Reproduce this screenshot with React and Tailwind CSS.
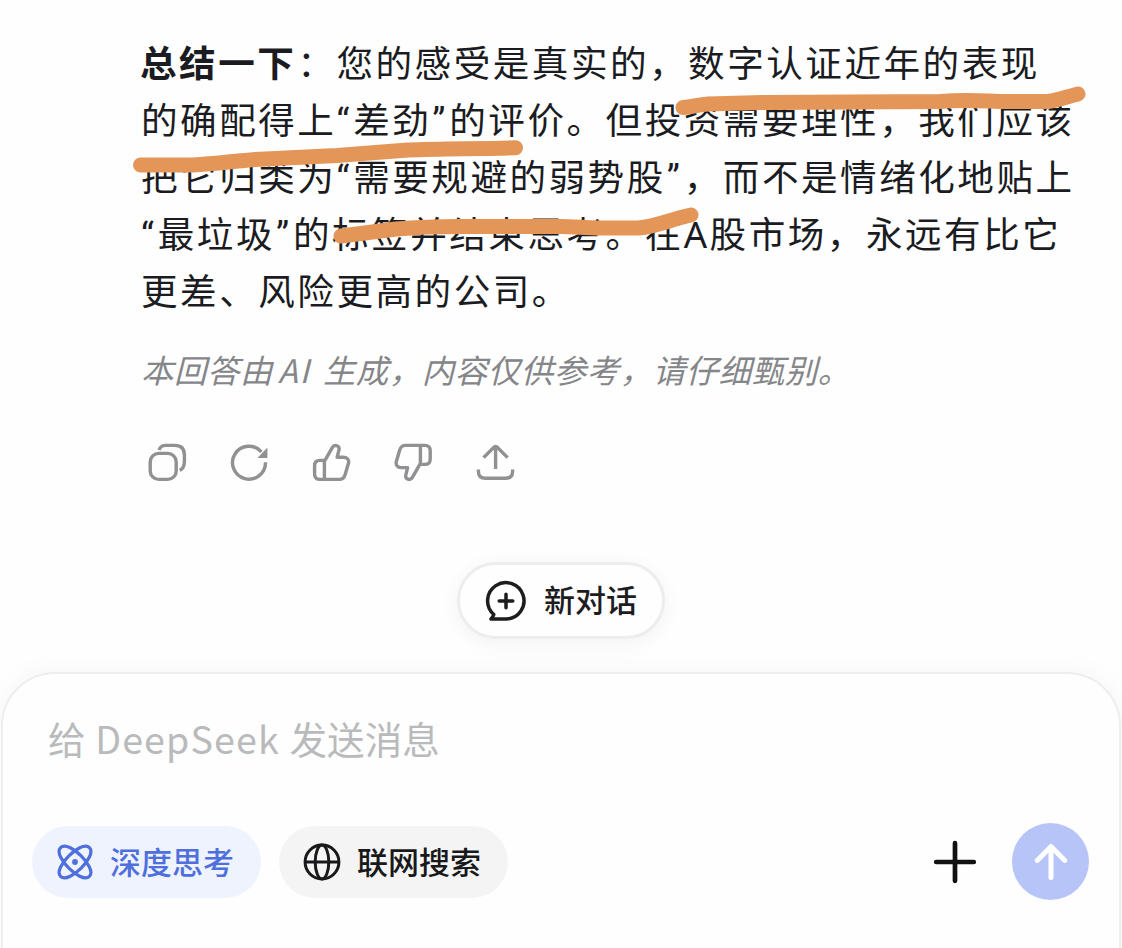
const answerFont = "font-['Noto_Sans','Noto_Sans_CJK_SC',sans-serif]";
const uiFont = "font-['Noto_Sans_CJK_SC',sans-serif]";

const THUMB =
  "M13.4 19.4 L21.4 5.4 C23.4 1.8 29.2 3.6 27.9 8.2 L26.2 15.2 H32.4 C36.6 15.2 38.4 18.2 37.4 21.6 L34 33 C33 36.2 31.6 37.4 28.4 37.4 H8.8 C5.6 37.4 3.6 35.4 3.6 32.2 V23.6 C3.6 20.4 5.6 18.4 8.8 18.4 H13.4 V37";

const ORBIT =
  "M-20.4 0 C-20.4 -6.4 -8.6 -8.7 0 -8.7 C8.6 -8.7 20.4 -6.4 20.4 0 C20.4 6.4 8.6 8.7 0 8.7 C-8.6 8.7 -20.4 6.4 -20.4 0 Z";

function ActionIcon({ label, children }) {
  return (
    <button type="button" aria-label={label}>
      <svg
        className="size-10 block"
        viewBox="0 0 40 40"
        fill="none"
        stroke="currentColor"
        strokeWidth="3.4"
        strokeLinejoin="round"
      >
        {children}
      </svg>
    </button>
  );
}

function Actions() {
  return (
    <div className="mt-[46px] ml-[6px] flex gap-[42px] text-[#919194]">
      <ActionIcon label="复制">
        <rect x="3.2" y="11.4" width="26" height="26" rx="8.5" />
        <path d="M12 8 C13.2 4.8 15.4 3.4 18.6 3.4 H27.6 C33.8 3.4 37.4 6.8 37.4 13 V19.6 C37.4 24 36.2 26.8 32.8 28.4" />
      </ActionIcon>
      <ActionIcon label="重新生成">
        <path d="M36.5 20.2 A16.5 16.5 0 1 1 32.4 9.8" />
        <path d="M38.4 5.4 V16 H28.4 Z" fill="currentColor" stroke="none" />
      </ActionIcon>
      <ActionIcon label="喜欢">
        <path d={THUMB} />
      </ActionIcon>
      <ActionIcon label="不喜欢">
        <path d={THUMB} transform="rotate(180 20.4 20.4)" />
      </ActionIcon>
      <ActionIcon label="分享">
        <path d="M20.6 27 V4.4 M8.6 15.6 L19.2 5 Q20.6 3.8 22 5 L32.6 15.6" />
        <path d="M3.4 27.4 V29.4 C3.4 34.2 5.6 36.2 10.4 36.2 H30.6 C35.4 36.2 37.6 34.2 37.6 29.4 V27.4" />
      </ActionIcon>
    </div>
  );
}

// trazos de resaltador sobre el texto
function Marker() {
  return (
    <svg
      className="pointer-events-none absolute left-0 top-0"
      width="1122"
      height="320"
      fill="none"
      stroke="#e49659"
      strokeWidth="15"
      strokeLinecap="round"
      strokeLinejoin="round"
    >
      <path d="M683 107.5 C692 107 698 104.5 708 104 L762 102.5 L940 101.5 C965 99 985 101 1002 101.5 H1048 C1058 100 1068 96.5 1078 94" />
      <path d="M140.5 165 H193 C215 164 235 161 255 159.5 L337 155.5 L408 150 C440 148.5 480 149 515.5 147.8" />
      <path d="M341 236 L396 229 C425 226.5 440 226.5 460 226.5 H560 C575 226.5 585 228 600 228 H638 C655 227 672 219 691 215" />
    </svg>
  );
}

// comillas curvas, un poco más anchas que las de Noto Sans
function Quoted({ children }) {
  return (
    <>
      <span className="font-['Roboto'] leading-none pr-[1.3px]">“</span>
      {children}
      <span className="font-['Roboto'] leading-none pl-[1px] pr-[1.4px]">”</span>
    </>
  );
}

function Answer() {
  return (
    <article className="pl-[141px] pt-[35px]">
      <p
        className={`${answerFont} h-[285px] text-[36.6px] leading-[57px] tracking-[2.5px] text-[#1b1c22] whitespace-nowrap`}
      >
        <strong className="-ml-px mr-px font-bold">总结一下</strong>：您的感受是真实的，数字认证近年的表现
        <br />
        的确配得上<Quoted>差劲</Quoted>的评价。但投资需要理性，我们应该
        <br />
        把它归类为<Quoted>需要规避的弱势股</Quoted>，而不是情绪化地贴上
        <br />
        <Quoted>最垃圾</Quoted>的标签并结束思考。在A股市场，永远有比它
        <br />
        更差、风险更高的公司。
      </p>
      <p
        className={`${uiFont} mt-[22px] h-[54px] text-[32.4px] leading-[54px] tracking-[0.6px] italic text-[#858689] whitespace-nowrap`}
      >
        本回答由<span className="-ml-[4px] mr-[3px] tracking-[1.8px]"> AI </span>生成，内容仅供参考，请仔细甄别。
      </p>
      <Actions />
    </article>
  );
}

function Composer() {
  return (
    <section
      className={`${uiFont} mx-px mt-[33px] h-[290px] shrink-0 rounded-t-[54px] border-2 border-[#eeeeee] bg-[#fefefe] shadow-[0_0_28px_rgba(0,0,0,0.04)]`}
    >
      <div className="pl-[45px] pt-[36px] text-[37.6px] leading-[56px] text-[#b9babb] whitespace-nowrap">
        给<span className="tracking-[1.15px]"> DeepSeek </span>发送消息
      </div>
      <div className="mt-[57px] flex items-center pl-[29px] pr-[30px] text-[31px] font-medium">
        <button
          type="button"
          className="flex h-[72px] w-[229px] items-center rounded-full bg-[#eef3fe] pl-[25px] text-[#4f6fdd]"
        >
          <svg className="size-9" viewBox="-18 -18 36 36" fill="none" stroke="currentColor" strokeWidth="3.2">
            <path d={ORBIT} transform="rotate(45)" />
            <path d={ORBIT} transform="rotate(-45)" />
            <circle r="2.9" fill="currentColor" stroke="none" />
          </svg>
          <span className="ml-[17px]">深度思考</span>
        </button>
        <button
          type="button"
          className="ml-[18px] flex h-[72px] w-[229px] items-center rounded-full bg-[#f4f4f4] pl-[24px] text-[#18191a]"
        >
          <svg className="size-[38px]" viewBox="-19 -19 38 38" fill="none" stroke="currentColor" strokeWidth="3">
            <circle r="16.9" />
            <ellipse rx="6.8" ry="16.9" />
            <path d="M-17 0 H17" />
          </svg>
          <span className="ml-[16px]">联网搜索</span>
        </button>
        <button type="button" aria-label="添加" className="ml-auto">
          <svg className="size-[44px]" viewBox="-22 -22 44 44" fill="none" stroke="#111111" strokeWidth="4.7" strokeLinecap="round">
            <path d="M-18.8 0 H18.8 M0 -18.8 V18.8" />
          </svg>
        </button>
        <button
          type="button"
          aria-label="发送"
          className="ml-[35px] flex size-[77px] items-center justify-center rounded-full bg-[#b7c4f8]"
        >
          <svg
            className="size-[40px]"
            viewBox="-20 -20 40 40"
            fill="none"
            stroke="#ffffff"
            strokeWidth="5"
            strokeLinecap="round"
            strokeLinejoin="round"
          >
            <path d="M0 15.5 V-15.5 M-13.8 -1.6 L0 -15.5 L13.8 -1.6" />
          </svg>
        </button>
      </div>
    </section>
  );
}

export default function App() {
  return (
    <main className="relative flex h-[948px] w-[1122px] flex-col overflow-hidden bg-[#fefefe]">
      <Answer />
      <button
        type="button"
        className={`${uiFont} mx-auto mt-[80px] flex h-[77px] w-[208px] shrink-0 items-center rounded-full border-3 border-[#ededed] bg-[#fefefe] pl-[25px] text-[31px] font-medium text-[#1d1d1f] shadow-[0_4px_20px_rgba(0,0,0,0.05)]`}
      >
        <svg className="size-[42px]" viewBox="-21 -21 42 42" fill="none" stroke="currentColor" strokeWidth="3.5" strokeLinejoin="round" strokeLinecap="round">
          <path d="M-15 18 H0.5 A18.2 18.2 0 1 0 -12.2 13.5 Q-13 16 -15 18 Z" />
          <path d="M-6.8 0 H6.8 M0 -6.8 V6.8" />
        </svg>
        <span className="ml-[17px] mb-[2px]">新对话</span>
      </button>
      <Composer />
      <Marker />
    </main>
  );
}
